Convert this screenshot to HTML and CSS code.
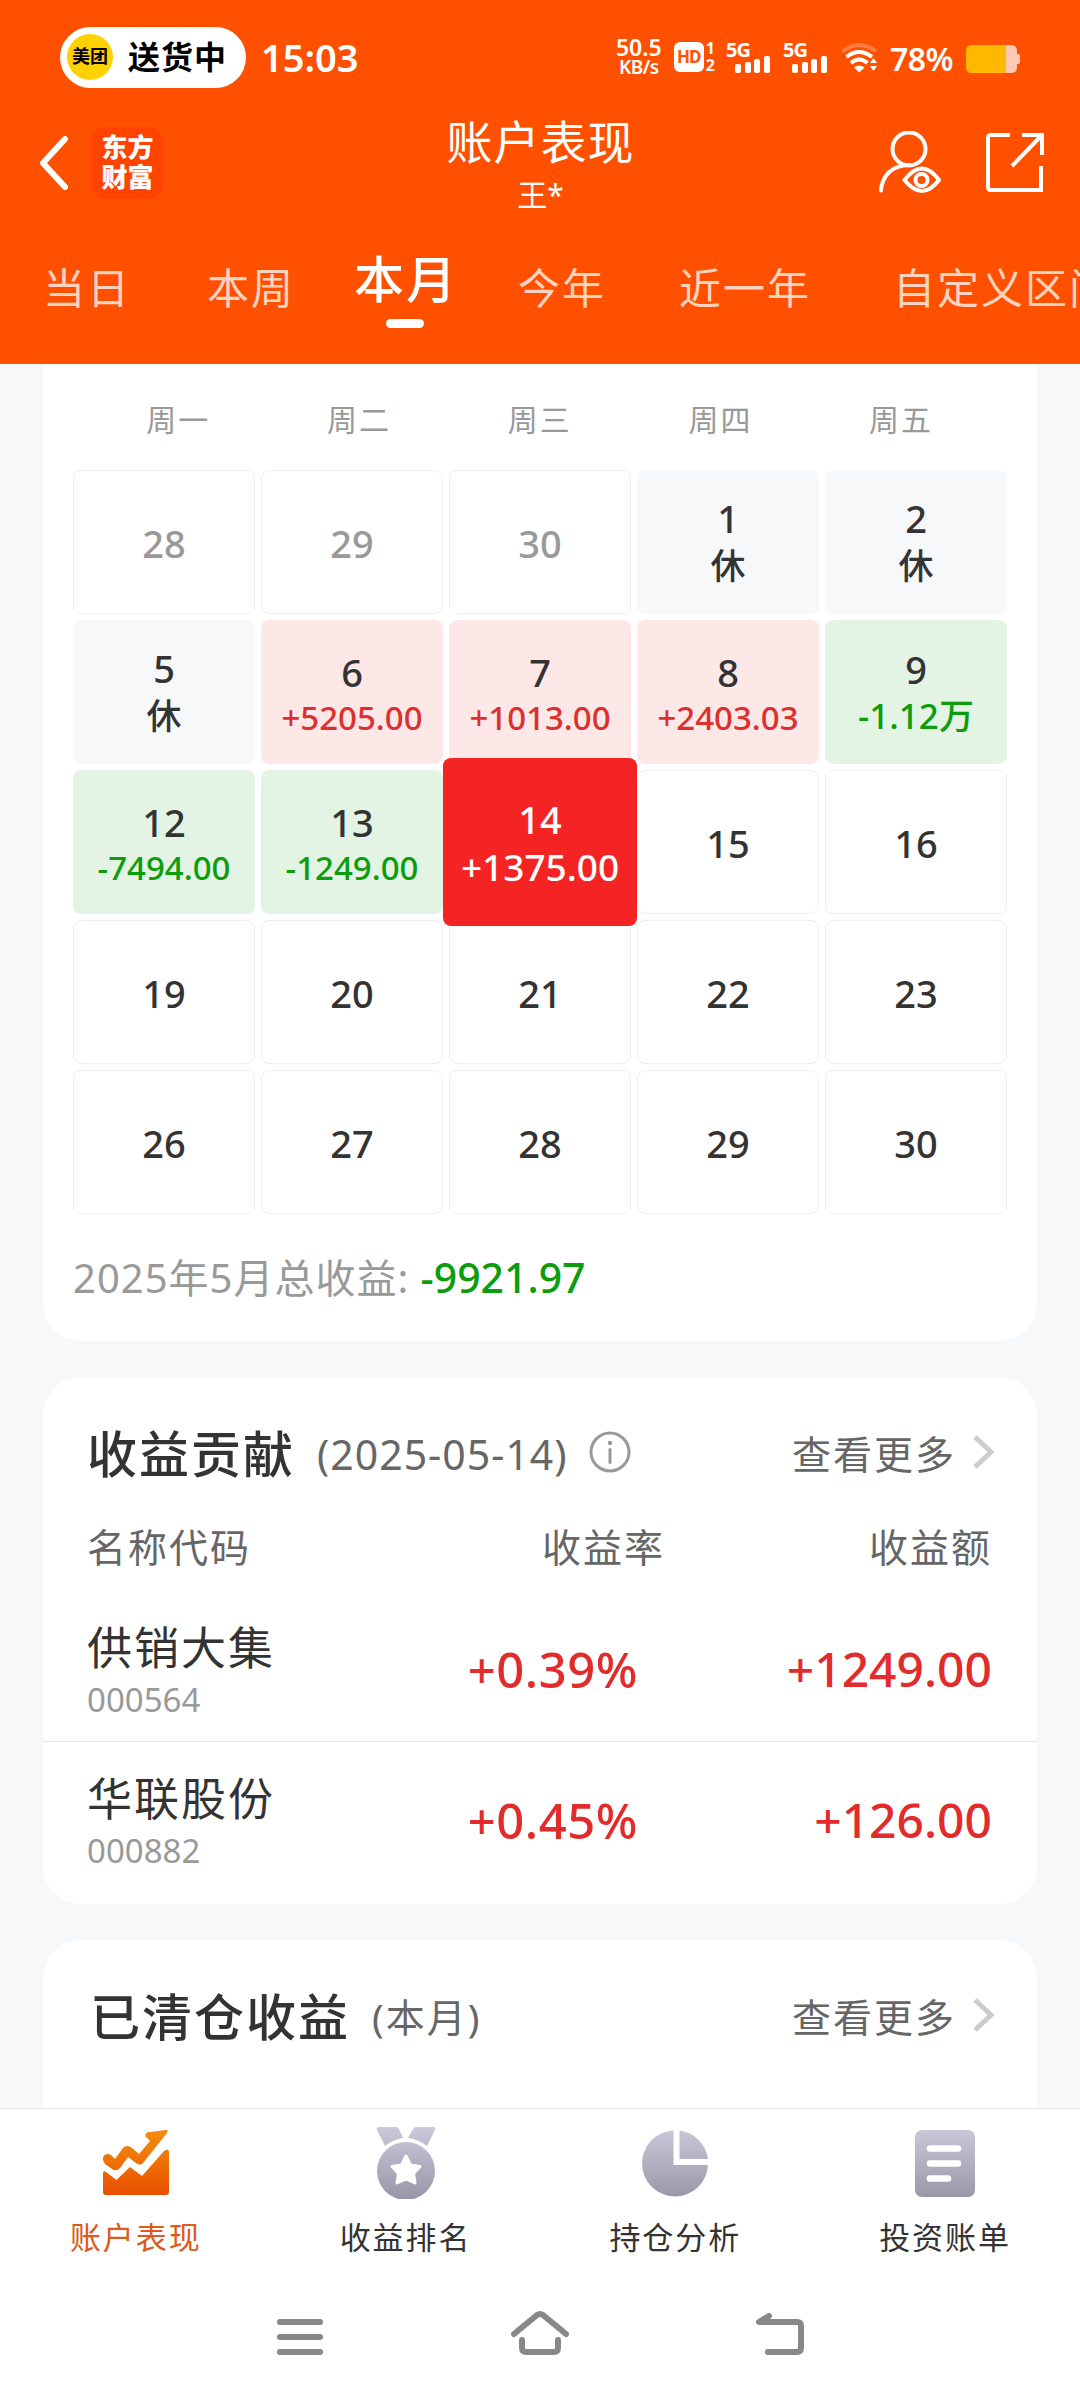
FILE: index.html
```
<!DOCTYPE html>
<html lang="zh-CN">

<head>
    <meta charset="UTF-8">
    <meta name="viewport" content="width=device-width, initial-scale=1.0">
    <title>账户表现</title>
    <link rel="stylesheet" href="styles.css">
</head>

<body>
    <header class="header">
        <div class="status">
            <div class="pill">
                <span class="pill-logo">美团</span>
                <span class="pill-text">送货中</span>
            </div>
            <span class="clock">15:03</span>
            <div class="status-right">
                <div class="speed"><span class="speed-num">50.5</span><span class="speed-unit">KB/s</span></div>
                <div class="hd">
                    <span class="hd-box">HD</span>
                    <span class="hd-sims"><span>1</span><span>2</span></span>
                </div>
                <div class="signal">
                    <span>5G</span>
                    <svg width="36" height="17" viewBox="0 0 36 17" fill="#fff">
                        <rect x="0" y="8" width="6" height="9" rx="2" />
                        <rect x="10" y="6" width="6" height="11" rx="2" />
                        <rect x="19" y="3" width="6" height="14" rx="2" />
                        <rect x="29" y="0" width="6" height="17" rx="2" />
                    </svg>
                </div>
                <div class="signal signal2">
                    <span>5G</span>
                    <svg width="36" height="17" viewBox="0 0 36 17" fill="#fff">
                        <rect x="0" y="8" width="6" height="9" rx="2" />
                        <rect x="10" y="6" width="6" height="11" rx="2" />
                        <rect x="19" y="3" width="6" height="14" rx="2" />
                        <rect x="29" y="0" width="6" height="17" rx="2" />
                    </svg>
                </div>
                <svg class="wifi" width="38" height="30" viewBox="0 0 38 30" fill="none" stroke="#fff" stroke-width="4">
                    <path d="M1.500 8.500Q18 -4.500 35 8.500" stroke="#ff7d42" />
                    <path d="M5.500 14Q18 4 31 14" />
                    <path d="M10 20Q18 13 26.500 20" />
                    <path d="M13 24.500Q18 20.500 23.500 24.500L18.200 29.500Z" fill="#fff" stroke="none" />
                    <path d="M29 20L32.500 15L36 20ZM29 23L32.500 28L36 23Z" fill="#fff" stroke="none" />
                </svg>
                <span class="percent">78%</span>
                <svg class="battery" width="54" height="28" viewBox="0 0 54 28">
                    <path d="M40 0H45Q51 0 51 6V9H52Q54 9 54 11V17Q54 19 52 19H51V22Q51 28 45 28H40Z" fill="#ffcab3" />
                    <path d="M6 0H40V28H6Q0 28 0 22V6Q0 0 6 0Z" fill="#ffb700" />
                </svg>
            </div>
        </div>

        <div class="nav">
            <div class="nav-left">
                <svg width="28" height="54" viewBox="0 0 28 54" fill="none" stroke="#fff" stroke-width="6" stroke-linecap="round" stroke-linejoin="round">
                    <path d="M25 3L3 27L25 51" />
                </svg>
                <div class="brand">东方<br>财富</div>
            </div>
            <div class="nav-title">
                <h1>账户表现</h1>
                <p>王*</p>
            </div>
            <div class="nav-right">
                <svg width="64" height="64" viewBox="0 0 64 64" fill="none" stroke="#fff" stroke-width="4" stroke-linecap="round">
                    <circle cx="32" cy="18" r="16.500" />
                    <path d="M4 59.500C5 45 15 34 32 34" />
                    <path d="M27.500 49Q45 26 62 49Q45 71 27.500 49Z" stroke-linejoin="round" />
                    <circle cx="44.500" cy="49" r="6" />
                </svg>
                <svg width="58" height="60" viewBox="0 0 58 60" fill="none" stroke="#fff" stroke-width="4">
                    <path d="M24 2H5Q2 2 2 5V54Q2 57 5 57H55V33" />
                    <path d="M36 2H56V22M56 2L26 33" />
                </svg>
            </div>
        </div>

        <div class="tabs">
            <span>当日</span>
            <span>本周</span>
            <span class="active">本月</span>
            <span>今年</span>
            <span>近一年</span>
            <span>自定义区间</span>
        </div>
    </header>

    <main>
        <section class="card calendar">
            <div class="weekdays">
                <span>周一</span><span>周二</span><span>周三</span><span>周四</span><span>周五</span>
            </div>
            <div class="days">
                <div class="day other">28</div>
                <div class="day other">29</div>
                <div class="day other">30</div>
                <div class="day rest">1<span>休</span></div>
                <div class="day rest">2<span>休</span></div>

                <div class="day rest">5<span>休</span></div>
                <div class="day up">6<span>+5205.00</span></div>
                <div class="day up">7<span>+1013.00</span></div>
                <div class="day up">8<span>+2403.03</span></div>
                <div class="day down wan">9<span>-1.12万</span></div>

                <div class="day down">12<span>-7494.00</span></div>
                <div class="day down">13<span>-1249.00</span></div>
                <div class="day selected">14<span>+1375.00</span></div>
                <div class="day">15</div>
                <div class="day">16</div>

                <div class="day">19</div>
                <div class="day">20</div>
                <div class="day">21</div>
                <div class="day">22</div>
                <div class="day">23</div>

                <div class="day">26</div>
                <div class="day">27</div>
                <div class="day">28</div>
                <div class="day">29</div>
                <div class="day">30</div>
            </div>
            <p class="total">2025年5月总收益: <b>-9921.97</b></p>
        </section>

        <section class="card contribution">
            <div class="card-head">
                <h2>收益贡献</h2>
                <span class="sub">(2025-05-14)</span>
                <svg class="info" width="42" height="42" viewBox="0 0 42 42" fill="none" stroke="#999" stroke-width="3">
                    <circle cx="21" cy="21" r="19" />
                    <path d="M21 18.500V31.500" stroke-linecap="round" />
                    <circle cx="21" cy="12" r="2.200" fill="#999" stroke="none" />
                </svg>
                <a class="more">查看更多
                    <svg width="22" height="36" viewBox="0 0 22 36" fill="none" stroke="#ccc" stroke-width="5">
                        <path d="M2 3L18 18L2 33" />
                    </svg>
                </a>
            </div>
            <div class="row thead">
                <span>名称代码</span>
                <span class="rate">收益率</span>
                <span class="amount">收益额</span>
            </div>
            <div class="row stock">
                <div>
                    <h3>供销大集</h3>
                    <small>000564</small>
                </div>
                <span class="rate">+0.39%</span>
                <span class="amount">+1249.00</span>
            </div>
            <div class="row stock">
                <div>
                    <h3>华联股份</h3>
                    <small>000882</small>
                </div>
                <span class="rate">+0.45%</span>
                <span class="amount">+126.00</span>
            </div>
        </section>

        <section class="card cleared">
            <div class="card-head">
                <h2>已清仓收益</h2>
                <span class="sub">(本月)</span>
                <a class="more">查看更多
                    <svg width="22" height="36" viewBox="0 0 22 36" fill="none" stroke="#ccc" stroke-width="5">
                        <path d="M2 3L18 18L2 33" />
                    </svg>
                </a>
            </div>
        </section>
    </main>

    <footer class="footer">
        <div class="menu">
            <div class="menu-item on">
                <svg width="76" height="76" viewBox="0 0 76 76">
                    <defs>
                        <linearGradient id="orange" gradientUnits="userSpaceOnUse" x1="0" y1="5" x2="0" y2="70">
                            <stop offset="0" stop-color="#f39012" />
                            <stop offset=".4" stop-color="#f07808" />
                            <stop offset="1" stop-color="#e85000" />
                        </linearGradient>
                        <linearGradient id="grey" gradientUnits="userSpaceOnUse" x1="0" y1="4" x2="0" y2="74">
                            <stop offset="0" stop-color="#cac8da" />
                            <stop offset="1" stop-color="#9a98a8" />
                        </linearGradient>
                    </defs>
                    <path d="M5 50Q5 47 8 49L18.500 57L32 44L44 53L66 28Q71 24 71 30V69Q71 72 68 72H8Q5 72 5 69Z" fill="url(#orange)" />
                    <path d="M5 37C4 31 11 29 14 33L17 36L25 25Q29 21 34 25L41 31L52 18L48 14C46 11 49 9 52 9L67 7Q71 6 69 10L45 40Q42 43 38 40L30 34L22 45Q18 49 14 46L7 41Z" fill="url(#orange)" />
                </svg>
                <span>账户表现</span>
            </div>
            <div class="menu-item">
                <svg width="76" height="76" viewBox="0 0 76 76" fill="url(#grey)">
                    <path d="M11 4H28Q30 4 31 6L35 15Q26 16 17 23L9 7Q8 4 11 4ZM65 4H48Q46 4 45 6L40 15Q50 16 59 23L67 7Q68 4 65 4Z" />
                    <circle cx="38" cy="48" r="29" />
                    <path d="M38 33L42.500 42L52 43.500L45.500 50.500L47 60L38 56L29 60L30.500 50.500L24 43.500L33.500 42Z" fill="#fff" stroke="#fff" stroke-width="3" stroke-linejoin="round" />
                </svg>
                <span>收益排名</span>
            </div>
            <div class="menu-item">
                <svg width="76" height="76" viewBox="0 0 76 76" fill="url(#grey)">
                    <path d="M36.500 7.500A33 33 0 1 0 71 42H36.500Z" />
                    <path d="M42.500 7.500A33 33 0 0 1 71 36H42.500Z" />
                </svg>
                <span>持仓分析</span>
            </div>
            <div class="menu-item">
                <svg width="76" height="76" viewBox="0 0 76 76">
                    <rect x="8" y="7" width="60" height="67" rx="7" fill="url(#grey)" />
                    <path d="M23 25.500H51M23 40.500H51M23 55.500H41" stroke="#fff" stroke-width="6.600" stroke-linecap="round" />
                </svg>
                <span>投资账单</span>
            </div>
        </div>
        <div class="system">
            <svg width="60" height="50" viewBox="0 0 60 50" fill="none" stroke="#888" stroke-width="6" stroke-linecap="round">
                <path d="M10 12H50M10 27H50M10 42H50" />
            </svg>
            <svg width="60" height="50" viewBox="0 0 60 50" fill="none" stroke="#888" stroke-width="6" stroke-linecap="round" stroke-linejoin="round">
                <path d="M4 24L27 5Q30 3 33 5L56 24M12 30V38Q12 42 16 42H44Q48 42 48 38V30" />
            </svg>
            <svg width="60" height="50" viewBox="0 0 60 50" fill="none" stroke="#888" stroke-width="6" stroke-linecap="round" stroke-linejoin="round">
                <path d="M19 6L9 12H47Q51 12 51 16V38Q51 42 47 42H18" />
            </svg>
        </div>
    </footer>
</body>

</html>
```
FILE: styles.css
```
* {
    padding: 0;
    margin: 0;
    box-sizing: border-box;
}

body {
    width: 1080px;
    height: 2400px;
    overflow: hidden;
    display: flex;
    flex-direction: column;
    background: #f7f8fa;
    color: #333;
    font-family: "Noto Sans", "Noto Sans CJK SC", sans-serif;
}

svg {
    display: block;
    flex: none;
}

h1,
h2,
h3 {
    font-weight: 400;
}

/* header */
.header {
    height: 364px;
    flex: none;
    background: #ff5000;
    color: white;
    overflow: hidden;
}

.status {
    height: 114px;
    padding: 0 60px;
    display: flex;
    align-items: center;
}

.pill {
    width: 186px;
    height: 61px;
    padding-left: 7px;
    border-radius: 31px;
    background: white;
    color: black;
    display: flex;
    align-items: center;
}

.pill-logo {
    width: 46px;
    height: 46px;
    line-height: 45px;
    border-radius: 50%;
    background: #ffd100;
    font-size: 18px;
    font-weight: 600;
    text-align: center;
}

.pill-text {
    margin-left: 15px;
    font-size: 32px;
    line-height: 46px;
    font-weight: 700;
    letter-spacing: 1px;
}

.clock {
    margin-left: 15px;
    font-size: 38px;
    line-height: 60px;
    font-weight: 600;
}

.status-right {
    margin-left: auto;
    display: flex;
    align-items: center;
}

.speed {
    width: 50px;
    display: flex;
    flex-direction: column;
    align-items: center;
    font-weight: 600;
}

.speed-num {
    font-size: 23px;
    line-height: 20px;
}

.speed-unit {
    font-size: 19px;
    line-height: 20px;
    letter-spacing: -0.5px;
}

.hd {
    display: flex;
    align-items: center;
    margin-left: 10px;
}

.hd-box {
    width: 30px;
    height: 30px;
    border-radius: 6px;
    background: white;
    color: #ff5000;
    font-size: 17px;
    line-height: 29px;
    font-weight: 700;
    text-align: center;
    letter-spacing: -1px;
}

.hd-sims {
    display: flex;
    flex-direction: column;
    margin-left: 2px;
    font-size: 16px;
    line-height: 17px;
    font-weight: 700;
}

.signal {
    width: 46px;
    height: 31px;
    margin-left: 11px;
}

.signal span {
    display: block;
    height: 14px;
    font-size: 20px;
    line-height: 15px;
    font-weight: 700;
    letter-spacing: -1px;
}

.signal svg {
    margin-left: 9px;
}

.signal2 {
    margin-left: 11px;
}

.wifi {
    margin-left: 12px;
    margin-top: 2px;
}

.percent {
    margin-left: 11px;
    width: 67px;
    font-size: 32px;
    line-height: 50px;
    font-weight: 600;
    letter-spacing: -0.5px;
    white-space: nowrap;
    margin-top: 3px;
}

.battery {
    margin-left: 9px;
    margin-top: 3px;
}

.nav {
    height: 126px;
    display: flex;
    justify-content: space-between;
    padding: 0 36px 0 40px;
}

.nav-left,
.nav-right {
    width: 200px;
    display: flex;
    align-items: center;
}

.nav-left {
    padding-bottom: 28px;
    height: 126px;
}

.brand {
    width: 71px;
    height: 72px;
    margin-left: 24px;
    padding-top: 5px;
    border-radius: 14px;
    background: #ff4400;
    font-size: 26px;
    line-height: 30px;
    font-weight: 900;
    text-align: center;
}

.nav-title {
    text-align: center;
}

.nav-title h1 {
    height: 58px;
    font-size: 46px;
    line-height: 55px;
    letter-spacing: 1px;
    margin-left: -3px;
}

.nav-title p {
    font-size: 30px;
    line-height: 46px;
    margin-left: -3px;
}

.nav-right {
    justify-content: flex-end;
    gap: 45px;
    height: 98px;
}

.tabs {
    height: 124px;
    padding-left: 43px;
    display: flex;
    white-space: nowrap;
    color: #ffd3bf;
    font-size: 42px;
    letter-spacing: 2px;
}

.tabs span {
    flex: none;
    line-height: 96px;
    margin-right: 76px;
}

.tabs .active {
    display: flex;
    flex-direction: column;
    align-items: center;
    color: white;
    font-size: 50px;
    line-height: 79px;
    font-weight: 500;
    margin: 0 60px 0 -17px;
}

.tabs .active::after {
    content: "";
    width: 38px;
    height: 9px;
    margin-right: 3px;
    border-radius: 5px;
    background: white;
}

.tabs span:nth-child(4) {
    margin-right: 73px;
}

.tabs span:nth-child(5) {
    margin-right: 82px;
}

/* cards */
main {
    height: 1744px;
    overflow: hidden;
    flex: none;
    padding: 0 43px;
}

.card {
    background: white;
    border-radius: 38px;
    margin-bottom: 36px;
}

.calendar {
    height: 977px;
    padding: 0 30px;
    border-radius: 0 0 38px 38px;
}

.weekdays {
    display: flex;
    height: 106px;
    padding: 0 0 0 15px;
    color: #999;
    font-size: 30px;
    line-height: 112px;
    letter-spacing: 2px;
    text-align: center;
}

.weekdays span {
    width: 180.7px;
}

.days {
    display: grid;
    grid-template-columns: repeat(5, 182px);
    grid-auto-rows: 144px;
    gap: 6px;
}

.day {
    display: flex;
    flex-direction: column;
    align-items: center;
    justify-content: center;
    padding-top: 2px;
    border: 1px solid #eee;
    border-radius: 8px;
    font-size: 38px;
    line-height: 46px;
    font-weight: 500;
}

.day span {
    font-size: 33px;
}

.other {
    color: #999;
}

.rest {
    background: #f7f8fa;
    border: none;
}

.day.rest span {
    font-size: 35px;
    line-height: 50px;
}

.up,
.down {
    border: none;
    padding-top: 5px;
}

.up {
    background: #fde8e7;
}

.down {
    background: #e4f4e4;
}

.up span {
    color: #dc2f2f;
}

.down span {
    color: #0c9c0c;
}

.down.wan {
    padding-top: 2px;
}

.day.wan span {
    font-size: 35px;
    line-height: 48px;
}

.selected {
    position: relative;
    margin: -12px -6px;
    border: none;
    background: #f42424;
    color: white;
    line-height: 48px;
}

.day.selected span {
    font-size: 37px;
}

.total {
    padding-top: 33px;
    color: #999;
    font-size: 40px;
    line-height: 60px;
    letter-spacing: 1px;
}

.total b {
    color: #0c9c0c;
    font-size: 41px;
    font-weight: 500;
    letter-spacing: 0;
}

.contribution {
    height: 527px;
}

.card-head {
    height: 138px;
    padding: 15px 42px 0 44px;
    display: flex;
    align-items: center;
}

.card-head h2 {
    font-size: 50px;
    line-height: 70px;
    font-weight: 500;
    letter-spacing: 2px;
}

.sub {
    margin-left: 22px;
    color: #666;
    font-size: 41px;
    line-height: 60px;
    letter-spacing: 1px;
}

.info {
    margin-left: 21px;
    margin-bottom: 3px;
}

.more {
    margin-left: auto;
    display: flex;
    align-items: center;
    gap: 17px;
    color: #666;
    font-size: 39px;
    line-height: 60px;
    letter-spacing: 2px;
}

.more svg {
    margin-bottom: 3px;
}

.row {
    display: flex;
    align-items: center;
    padding: 0 45px 0 44px;
}

.row > :first-child {
    width: 300px;
}

.thead {
    height: 60px;
    color: #666;
    font-size: 39px;
    letter-spacing: 2px;
}

.rate {
    width: 278px;
    text-align: right;
}

.amount {
    flex: 1;
    text-align: right;
}

.stock {
    height: 151px;
    margin-top: 15px;
    padding-top: 6px;
}

.stock + .stock {
    margin-top: 0;
    padding-top: 5px;
    border-top: 1px solid #e6e6e6;
}

.stock h3 {
    font-size: 45px;
    line-height: 58px;
    letter-spacing: 2px;
    margin-top: 5px;
}

.stock small {
    display: block;
    color: #999;
    font-size: 33px;
    line-height: 46px;
}

.stock .rate,
.stock .amount {
    color: #e22b2b;
    font-size: 48px;
    line-height: 60px;
    font-weight: 500;
}

.stock .rate {
    width: 251px;
    font-size: 49px;
    letter-spacing: 0.5px;
}

.cleared {
    height: 220px;
}

.cleared h2 {
    margin-left: 3px;
}

.cleared .sub {
    font-size: 39px;
    letter-spacing: 2px;
}

/* bottom */
.footer {
    height: 292px;
    flex: none;
    background: white;
    border-top: 1px solid #e8e9eb;
}

.menu {
    display: flex;
    height: 164px;
    padding-top: 14px;
    padding-left: 1px;
}

.menu-item {
    width: 270px;
    display: flex;
    flex-direction: column;
    align-items: center;
    font-size: 31px;
    line-height: 76px;
    letter-spacing: 2px;
}

.on {
    color: #dd5a1a;
}

.system {
    display: flex;
    justify-content: center;
    gap: 180px;
    padding-top: 37px;
}
```
